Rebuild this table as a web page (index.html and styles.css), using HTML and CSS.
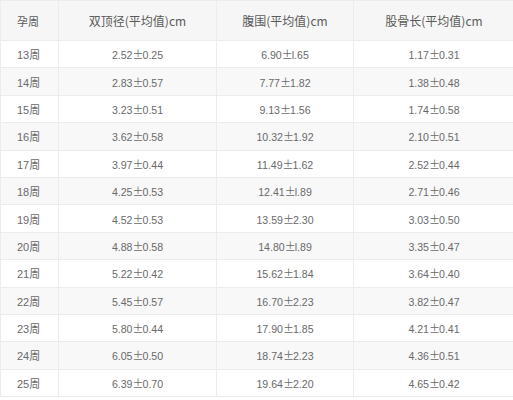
FILE: index.html
```html
<!DOCTYPE html>
<html>
<head>
<meta charset="utf-8">
<link rel="stylesheet" href="styles.css">
</head>
<body>
<table class="tbl">
  <colgroup>
    <col class="c1"><col class="c2"><col class="c3"><col class="c4">
  </colgroup>
  <thead>
    <tr><th class="first">孕周</th><th>双顶径(平均值)cm</th><th>腹围(平均值)cm</th><th>股骨长(平均值)cm</th></tr>
  </thead>
  <tbody>
    <tr><td class="first">13周</td><td>2.52<span class="pm">±</span>0.25</td><td>6.90<span class="pm">±</span>l.65</td><td>1.17<span class="pm">±</span>0.31</td></tr>
    <tr><td class="first">14周</td><td>2.83<span class="pm">±</span>0.57</td><td>7.77<span class="pm">±</span>1.82</td><td>1.38<span class="pm">±</span>0.48</td></tr>
    <tr><td class="first">15周</td><td>3.23<span class="pm">±</span>0.51</td><td>9.13<span class="pm">±</span>1.56</td><td>1.74<span class="pm">±</span>0.58</td></tr>
    <tr><td class="first">16周</td><td>3.62<span class="pm">±</span>0.58</td><td>10.32<span class="pm">±</span>1.92</td><td>2.10<span class="pm">±</span>0.51</td></tr>
    <tr><td class="first">17周</td><td>3.97<span class="pm">±</span>0.44</td><td>11.49<span class="pm">±</span>1.62</td><td>2.52<span class="pm">±</span>0.44</td></tr>
    <tr><td class="first">18周</td><td>4.25<span class="pm">±</span>0.53</td><td>12.41<span class="pm">±</span>l.89</td><td>2.71<span class="pm">±</span>0.46</td></tr>
    <tr><td class="first">19周</td><td>4.52<span class="pm">±</span>0.53</td><td>13.59<span class="pm">±</span>2.30</td><td>3.03<span class="pm">±</span>0.50</td></tr>
    <tr><td class="first">20周</td><td>4.88<span class="pm">±</span>0.58</td><td>14.80<span class="pm">±</span>l.89</td><td>3.35<span class="pm">±</span>0.47</td></tr>
    <tr><td class="first">21周</td><td>5.22<span class="pm">±</span>0.42</td><td>15.62<span class="pm">±</span>1.84</td><td>3.64<span class="pm">±</span>0.40</td></tr>
    <tr><td class="first">22周</td><td>5.45<span class="pm">±</span>0.57</td><td>16.70<span class="pm">±</span>2.23</td><td>3.82<span class="pm">±</span>0.47</td></tr>
    <tr><td class="first">23周</td><td>5.80<span class="pm">±</span>0.44</td><td>17.90<span class="pm">±</span>1.85</td><td>4.21<span class="pm">±</span>0.41</td></tr>
    <tr><td class="first">24周</td><td>6.05<span class="pm">±</span>0.50</td><td>18.74<span class="pm">±</span>2.23</td><td>4.36<span class="pm">±</span>0.51</td></tr>
    <tr><td class="first">25周</td><td>6.39<span class="pm">±</span>0.70</td><td>19.64<span class="pm">±</span>2.20</td><td>4.65<span class="pm">±</span>0.42</td></tr>
  </tbody>
</table>
</body>
</html>
```
FILE: styles.css
```css
html, body {
  margin: 0;
  padding: 0;
  background: #ffffff;
}
body {
  font-family: "Noto Sans CJK SC", "Noto Sans", sans-serif;
  font-size: 12px;
  color: #666666;
}
.tbl {
  border-collapse: collapse;
  table-layout: fixed;
  width: 514px;
  border-left: 1px solid #eeeeee;
}
.c1 { width: 58px; }
.c2 { width: 158px; }
.c3 { width: 137px; }
.c4 { width: 161px; }
.tbl th, .tbl td {
  border: 1px solid #ececec;
  text-align: center;
  padding: 0;
  white-space: nowrap;
  overflow: hidden;
}
.tbl th {
  height: 39px;
  font-weight: normal;
  font-size: 12px;
  color: #5a5a5a;
  background: #f6f6f6;
}
.tbl td {
  height: 26.4px;
  font-family: "Liberation Sans", "Noto Sans CJK SC", sans-serif;
  font-size: 10.6px;
  color: #6a6a6a;
}
.pm {
  font-family: "Noto Sans CJK SC", sans-serif;
  font-size: 11px;
  display: inline-block;
  width: 10px;
  text-align: center;
}
.tbl tbody tr:nth-child(odd) td { background: #ffffff; }
.tbl tbody tr:nth-child(even) td { background: #f8f8f8; }
.tbl .first {
  text-align: left;
  padding-left: 16px;
  font-size: 11px;
}
```
